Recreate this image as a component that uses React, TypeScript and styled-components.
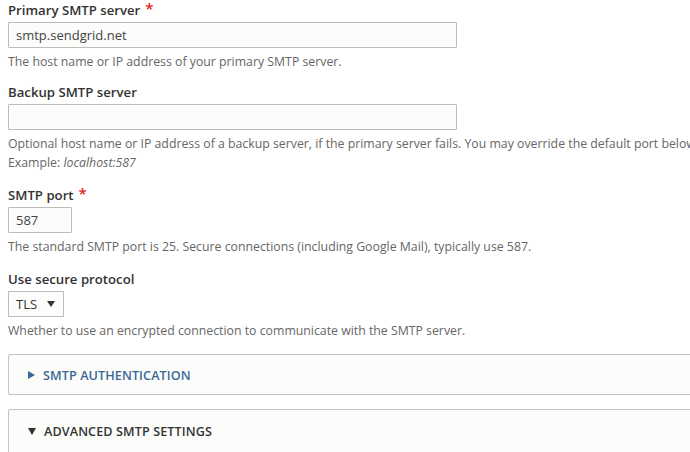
import React from 'react';
import styled, { createGlobalStyle } from 'styled-components';

const GlobalStyle = createGlobalStyle`
  html, body {
    margin: 0;
    padding: 0;
    background: #ffffff;
    overflow: hidden;
  }
  body {
    font-family: 'Open Sans', 'Liberation Sans', sans-serif;
    color: #333333;
  }
`;

const Page = styled.div`
  width: 1000px;
  padding: 0 0 0 8px;
`;

const FormItem = styled.div<{ $gap?: number }>`
  margin-bottom: ${p => (p.$gap ?? 11)}px;
`;

const Label = styled.label`
  display: flex;
  align-items: center;
  font-size: 13.2px;
  font-weight: 600;
  line-height: 20px;
  height: 20px;
  margin-bottom: 2px;
  color: #333333;
`;

const Required = styled.span`
  color: #e11a1a;
  margin-left: 5px;
  font-size: 15px;
  line-height: 16px;
  align-self: flex-start;
`;

const TextInput = styled.input<{ $width: number }>`
  display: block;
  box-sizing: border-box;
  width: ${p => p.$width}px;
  height: 26px;
  margin: 0;
  padding: 0 7px;
  border: 1px solid #bcbcbc;
  border-radius: 1px;
  background: #fcfcfa;
  font-family: inherit;
  font-size: 13px;
  color: #444444;
  outline: none;
`;

const Select = styled.div`
  display: inline-flex;
  align-items: center;
  box-sizing: border-box;
  height: 26px;
  padding: 0 8px 0 7px;
  gap: 10px;
  border: 1px solid #bcbcbc;
  background: #fcfcfa;
  font-size: 13px;
  color: #333333;
`;

const SelectArrow = styled.span`
  width: 0;
  height: 0;
  border-left: 4px solid transparent;
  border-right: 4px solid transparent;
  border-top: 6px solid #333333;
`;

const Description = styled.div`
  margin-top: 4px;
  font-size: 12.3px;
  line-height: 19px;
  color: #666666;
  white-space: nowrap;

  em {
    font-style: italic;
  }
`;

const Details = styled.div<{ $open?: boolean }>`
  box-sizing: border-box;
  width: 900px;
  border: 1px solid #c4c4c4;
  border-radius: 2px;
  background: #fcfcfa;
  margin-bottom: 14px;
  height: ${p => (p.$open ? 80 : 41)}px;
`;

const Summary = styled.div<{ $open?: boolean }>`
  display: flex;
  align-items: center;
  gap: 8px;
  height: ${p => (p.$open ? 43 : 40)}px;
  padding-left: 19px;
  font-size: 12.6px;
  font-weight: 600;
  text-transform: uppercase;
  letter-spacing: 0.1px;
  color: ${p => (p.$open ? '#333333' : '#3a6896')};
`;

const Caret = styled.span<{ $open?: boolean }>`
  width: 0;
  height: 0;
  ${p =>
    p.$open
      ? `
    border-left: 4px solid transparent;
    border-right: 4px solid transparent;
    border-top: 7px solid #333333;
  `
      : `
    border-top: 4px solid transparent;
    border-bottom: 4px solid transparent;
    border-left: 7px solid #3a6896;
  `}
`;

export default function App() {
  return (
    <>
      <GlobalStyle />
      <Page>
        <FormItem>
          <Label>
            Primary SMTP server<Required>*</Required>
          </Label>
          <TextInput $width={449} defaultValue="smtp.sendgrid.net" />
          <Description>The host name or IP address of your primary SMTP server.</Description>
        </FormItem>

        <FormItem $gap={13}>
          <Label>Backup SMTP server</Label>
          <TextInput $width={449} defaultValue="" />
          <Description>
            Optional host name or IP address of a backup server, if the primary server fails. You may override the default port below.
            <br />
            Example: <em>localhost:587</em>
          </Description>
        </FormItem>

        <FormItem $gap={13}>
          <Label>
            SMTP port<Required>*</Required>
          </Label>
          <TextInput $width={64} defaultValue="587" />
          <Description>
            The standard SMTP port is 25. Secure connections (including Google Mail), typically use 587.
          </Description>
        </FormItem>

        <FormItem $gap={14}>
          <Label>Use secure protocol</Label>
          <Select>
            TLS
            <SelectArrow />
          </Select>
          <Description>Whether to use an encrypted connection to communicate with the SMTP server.</Description>
        </FormItem>

        <Details>
          <Summary>
            <Caret />
            SMTP Authentication
          </Summary>
        </Details>

        <Details $open>
          <Summary $open>
            <Caret $open />
            Advanced SMTP Settings
          </Summary>
        </Details>
      </Page>
    </>
  );
}
